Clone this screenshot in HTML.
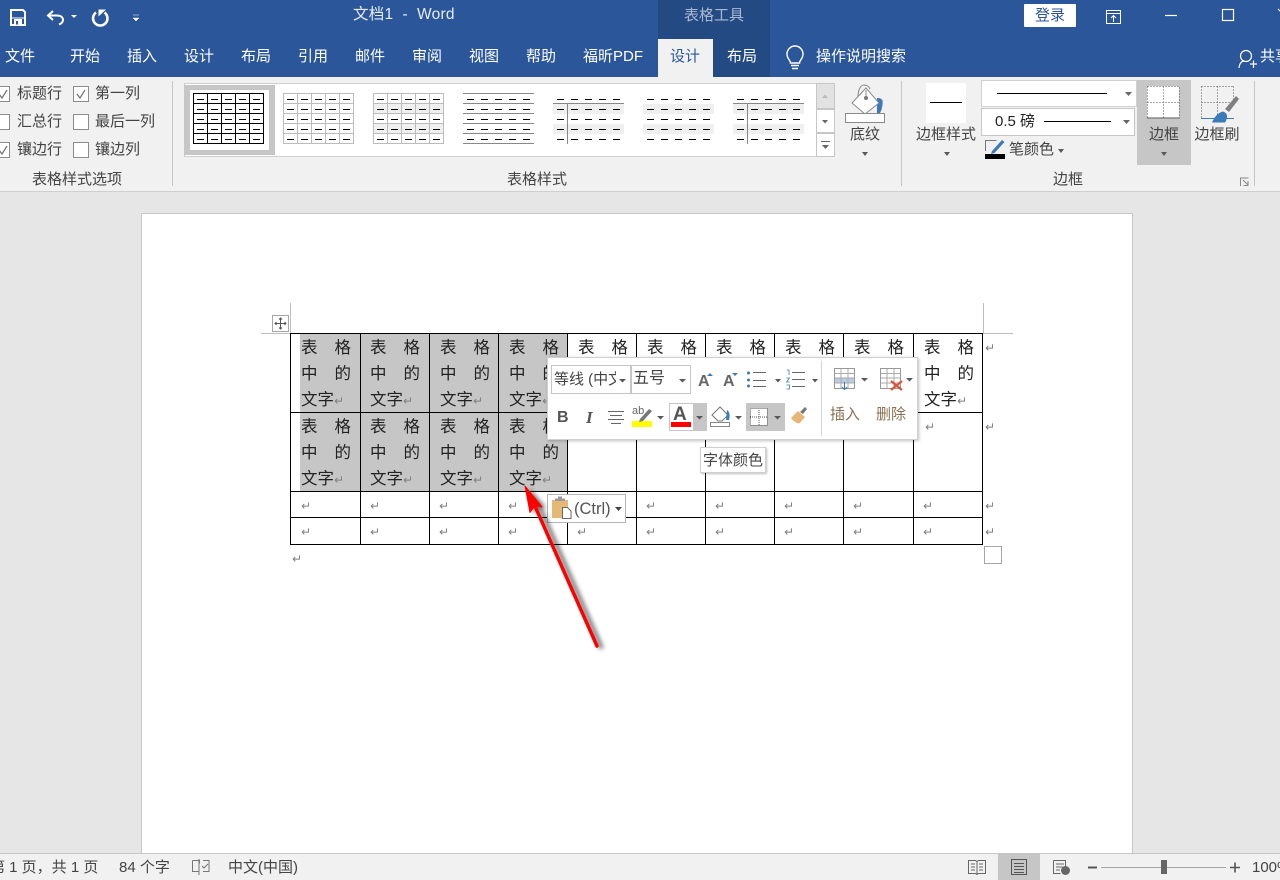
<!DOCTYPE html>
<html lang="zh"><head><meta charset="utf-8"><title>文档1 - Word</title>
<style>
html,body{margin:0;padding:0}
body{width:1280px;height:880px;overflow:hidden;position:relative;background:#e6e6e6;font-family:"Liberation Sans","Noto Sans CJK SC",sans-serif;color:#444}
.a,.t,.w,.c,.r{position:absolute}
.t{white-space:nowrap;font-size:15px;line-height:20px;color:#444}
.w{white-space:nowrap;font-size:15px;line-height:20px;color:#fff}
.m{transform:translateX(-50%)}
.c{width:50px;font-size:16.5px;line-height:26px;color:#222;white-space:nowrap}
.c div{display:flex;justify-content:space-between;height:26px}
.c i,.r{font-style:normal;font-family:"DejaVu Sans",sans-serif;font-size:12px;color:#808080}
.r{line-height:12px}
svg{position:absolute;left:0;top:0;overflow:visible}
</style></head><body>

<div class="a" style="left:0;top:0;width:1280px;height:77px;background:#2b579a"></div>
<div class="a" style="left:658px;top:0;width:112px;height:77px;background:#234a82"></div>
<div class="a" style="left:658px;top:39px;width:55px;height:38px;background:#f1f1f1"></div>
<div class="a" style="left:0;top:77px;width:1280px;height:114px;background:#f1f1f1;border-bottom:1px solid #cfcfcf"></div>
<div class="a" style="left:141px;top:213px;width:990px;height:640px;background:#fff;border:1px solid #c6c6c6;border-bottom:0"></div>
<div class="a" style="left:0;top:853px;width:1280px;height:27px;background:#f1f1f1;border-top:1px solid #c6c6c6;box-sizing:border-box"></div>

<div class="w" style="left:353px;top:5px;font-size:15.5px;color:#e6ebf3;letter-spacing:.25px">文档1&nbsp; -&nbsp; Word</div>
<div class="w m" style="left:714px;top:6px;color:#a9b9d1">表格工具</div>
<div class="a" style="left:1024px;top:4px;width:52px;height:23px;background:#fff;border-radius:1px"></div>
<div class="w m" style="left:1050px;top:6px;color:#2b579a">登录</div>

<div class="w" style="left:5px;top:47px">文件</div>
<div class="w" style="left:70px;top:47px">开始</div>
<div class="w" style="left:127px;top:47px">插入</div>
<div class="w" style="left:184px;top:47px">设计</div>
<div class="w" style="left:241px;top:47px">布局</div>
<div class="w" style="left:298px;top:47px">引用</div>
<div class="w" style="left:355px;top:47px">邮件</div>
<div class="w" style="left:412px;top:47px">审阅</div>
<div class="w" style="left:469px;top:47px">视图</div>
<div class="w" style="left:526px;top:47px">帮助</div>
<div class="w" style="left:583px;top:47px">福昕PDF</div>
<div class="w" style="left:670px;top:47px;color:#2b579a">设计</div>
<div class="w" style="left:727px;top:47px">布局</div>
<div class="w" style="left:816px;top:47px">操作说明搜索</div>
<div class="w" style="left:1260px;top:47px">共享</div>

<svg width="1280" height="880" viewBox="0 0 1280 880">
<defs>
<g id="d" stroke="#000" stroke-width="1">
<path d="M197 99.500h7M211 99.500h7M225 99.500h7M239 99.500h7M253 99.500h7M197 109.500h7M211 109.500h7M225 109.500h7M239 109.500h7M253 109.500h7M197 119.500h7M211 119.500h7M225 119.500h7M239 119.500h7M253 119.500h7M197 129.500h7M211 129.500h7M225 129.500h7M239 129.500h7M253 129.500h7M197 139.500h7M211 139.500h7M225 139.500h7M239 139.500h7M253 139.500h7"/>
</g>
<g id="grid" fill="none"><path d="M193.500 93.500h70v50h-70zM207.500 93.500v50M221.500 93.500v50M235.500 93.500v50M249.500 93.500v50M193.500 103.500h70M193.500 113.500h70M193.500 123.500h70M193.500 133.500h70"/></g>
<g id="band" fill="#f0f0f0"><rect x="193" y="104" width="71" height="10"/><rect x="193" y="124" width="71" height="10"/></g>
<g id="hl"><path d="M193 103.500h71" stroke="#888"/><path d="M207.500 104v40" stroke="#888"/></g>
</defs>

<!-- title bar icons -->
<path d="M11 10h12l2 2v13H11z" fill="none" stroke="#fff" stroke-width="2"/>
<path d="M14 19h8v6h-8z" fill="#fff"/><rect x="16" y="21" width="2" height="3.500" fill="#2b579a"/>
<path d="M11 18h14" stroke="#fff" stroke-width="1"/>
<path d="M53 11l-5 4.500 5 4.500" fill="none" stroke="#fff" stroke-width="2"/>
<path d="M48 15.500h9c4 0 6 2 6 4.500 0 2-1.500 3.500-4 4.500" fill="none" stroke="#fff" stroke-width="2"/>
<path d="M71 15h6l-3 3z" fill="#fff"/>
<path d="M96 12.500a7.200 7.200 0 1 0 8.500 0" fill="none" stroke="#fff" stroke-width="2.600"/>
<path d="M106 9.500h-7.500v7z" fill="#fff"/>
<path d="M133 15h6M133 18h6l-3 3z" fill="#fff" stroke="#fff" stroke-width=".5"/>
<path d="M1106.500 10.500h14v13h-14zM1106.500 13.500h14M1113.500 22v-6M1111 18l2.500-2.500 2.500 2.500" fill="none" stroke="#fff"/>
<path d="M1165 15.500h12" stroke="#fff" stroke-width="1.200"/>
<rect x="1222.500" y="9.500" width="11" height="11" fill="none" stroke="#fff" stroke-width="1.200"/>
<path d="M1278 9l3 3" stroke="#fff"/>
<!-- bulb, share -->
<path d="M790.500 63c0-3-3.500-4-3.500-9a8 8 0 0 1 16 0c0 5-3.500 6-3.500 9z" fill="none" stroke="#fff" stroke-width="1.400"/><path d="M791 65.500h8M792 68.500h6" stroke="#fff" stroke-width="1.400"/>
<circle cx="1246" cy="56" r="5.500" fill="none" stroke="#fff" stroke-width="1.200"/><path d="M1239 68c.5-5 3-7 5-7M1250 64h7M1253.500 60.500v7.500" fill="none" stroke="#fff" stroke-width="1.200"/>

<!-- checkboxes -->
<g fill="#fff" stroke="#8c8c8c">
<rect x="-5.500" y="86.500" width="15" height="15"/><rect x="-5.500" y="114.500" width="15" height="15"/><rect x="-5.500" y="142.500" width="15" height="15"/>
<rect x="73.500" y="86.500" width="15" height="15"/><rect x="73.500" y="114.500" width="15" height="15"/><rect x="73.500" y="142.500" width="15" height="15"/>
</g>
<path d="M-1 94l3 4 5-8M-1 150l3 4 5-8M77 94l3 4 5-8" fill="none" stroke="#777" stroke-width="1.300"/>

<!-- separators -->
<path d="M172.500 81v105M901.500 81v105M1254.500 81v105" stroke="#c6c6c6"/>

<!-- gallery -->
<rect x="184.500" y="83.500" width="650" height="73" fill="#fff" stroke="#d0d0d0"/>
<rect x="184" y="85" width="91" height="70" fill="#c6c6c6"/><rect x="190" y="90" width="79" height="60" fill="#fff"/>
<use href="#grid" stroke="#000" stroke-width="1"/><use href="#d"/>
<g transform="translate(90 0)"><use href="#grid" stroke="#bcbcbc"/><use href="#d"/></g>
<g transform="translate(180 0)"><use href="#band"/><use href="#grid" stroke="#bcbcbc"/><use href="#d"/></g>
<g transform="translate(270 0)"><path d="M193 93.500h71M193 103.500h71M193 113.500h71M193 123.500h71M193 133.500h71M193 143.500h71" stroke="#888"/><use href="#d"/></g>
<g transform="translate(360 0)"><use href="#band"/><use href="#hl"/><use href="#d"/></g>
<g transform="translate(450 0)"><use href="#band"/><use href="#d"/></g>
<g transform="translate(540 0)"><use href="#band"/><use href="#hl"/><use href="#d"/></g>
<!-- gallery scroll -->
<rect x="816.500" y="83.500" width="18" height="25" fill="#e2e2e2" stroke="#c6c6c6"/>
<rect x="816.500" y="109.500" width="18" height="23" fill="#fff" stroke="#c6c6c6"/>
<rect x="816.500" y="133.500" width="18" height="23" fill="#fff" stroke="#c6c6c6"/>
<path d="M822 98h6l-3-3.500z" fill="#bbb"/><path d="M822 120h6l-3 3.500z" fill="#666"/>
<path d="M821 141.500h9" stroke="#666"/><path d="M822 145h7l-3.500 4z" fill="#666"/>

<!-- shading -->
<path d="M877 98c3 0 5 1 5.500 2.500.5 4-.5 9-2.500 12.500h-3z" fill="#3d7ab8"/>
<path d="M852 103l14-15 13 15-14 11z" fill="#fff" stroke="#8a8a8a"/>
<path d="M858 97c0-8 3-12 6-12 3 0 5 1.500 6 4" fill="none" stroke="#8a8a8a"/><path d="M866 90v8" stroke="#8a8a8a"/><circle cx="866" cy="98" r="2" fill="#777"/>
<rect x="845.500" y="113.500" width="39" height="9" fill="#fff" stroke="#8a8a8a"/>
<g fill="#595959"><path d="M862 152h6l-3 4zM944 152h6l-3 4zM1058 149h6l-3 4z"/></g>

<!-- border styles -->
<rect x="926" y="83" width="40" height="40" fill="#fff"/><path d="M930 102.500h32" stroke="#000"/>
<rect x="981.500" y="80.500" width="155" height="26" fill="#fff" stroke="#d0d0d0"/>
<path d="M997 93.500h110" stroke="#000"/><path d="M1125 92h7l-3.500 4z" fill="#666"/>
<rect x="981.500" y="108.500" width="153" height="27" fill="#fff" stroke="#c6c6c6"/>
<path d="M1044 121.500h67" stroke="#000"/><path d="M1123 120h7l-3.500 4z" fill="#666"/>
<rect x="1137" y="80" width="54" height="85" fill="#c6c6c6"/>
<path d="M1161 152h6l-3 4z" fill="#595959"/>
<rect x="1147" y="86" width="32" height="32" fill="#fff"/>
<path d="M1147.500 86.500h32v31M1147.500 86.500v31M1163.500 86.500v31M1147.500 102.500h32" fill="none" stroke="#555" stroke-dasharray="1 2"/><path d="M1147 118h33" stroke="#777" stroke-width="1.200"/>
<path d="M1201.500 86.500h32M1201.500 86.500v31M1217.500 86.500v31M1201.500 102.500h32M1233.500 86.500v14" fill="none" stroke="#555" stroke-dasharray="1 2"/><path d="M1201 118.500h33" stroke="#3d7ab8"/>
<path d="M1225 109l11-13 3 3-10 13z" fill="#808080"/><path d="M1212 122.500c2-5 6-10 11-11 3 1 4.500 3.500 4 6-.5 2-1 4-2 5z" fill="#3d7ab8"/>
<!-- pen colour -->
<path d="M985.500 151v-10.500h11" fill="none" stroke="#777"/><rect x="985" y="154" width="20" height="5" fill="#000"/>
<path d="M992 151l10-11 2.500 2-10 11-3.500 1z" fill="#3d7ab8"/>
<!-- dialog launcher -->
<path d="M1240.500 186v-8h8M1243 180l5 5M1248 181v4.500h-4.500" fill="none" stroke="#888"/>

<!-- table crop marks -->
<path d="M290.500 303v30M261 333.500h30M983.500 303v30M983 333.500h30" stroke="#bdbdbd"/>
<rect x="272.500" y="315.500" width="16" height="16" fill="#fff" stroke="#a6a6a6"/>
<path d="M280.500 318v11M275 323.500h11M279 319.500l1.500-1.500 1.500 1.500M279 327.500l1.500 1.500 1.500-1.500M276.500 322l-1.500 1.500 1.500 1.500M284.500 322l1.500 1.500-1.500 1.500" fill="none" stroke="#555"/>
<rect x="984.500" y="546.500" width="17" height="17" fill="#fff" stroke="#a6a6a6"/>

<!-- table -->
<rect x="300" y="334" width="267" height="157" fill="#c6c6c6"/>
<path d="M290 333.500h693M290 412.500h693M290 491.500h693M290 517.500h693M290 544.500h693M290.500 333v212M360.500 333v212M429.500 333v212M498.500 333v212M567.500 333v212M636.500 333v212M705.500 333v212M774.500 333v212M843.500 333v212M913.500 333v212M982.500 333v212" stroke="#000" fill="none"/>
</svg>

<div class="c" style="left:301px;top:335px"><div><span>表</span><span>格</span></div><div><span>中</span><span>的</span></div><div><span>文字<i>↵</i></span></div></div>
<div class="c" style="left:370px;top:335px"><div><span>表</span><span>格</span></div><div><span>中</span><span>的</span></div><div><span>文字<i>↵</i></span></div></div>
<div class="c" style="left:440px;top:335px"><div><span>表</span><span>格</span></div><div><span>中</span><span>的</span></div><div><span>文字<i>↵</i></span></div></div>
<div class="c" style="left:509px;top:335px"><div><span>表</span><span>格</span></div><div><span>中</span><span>的</span></div><div><span>文字<i>↵</i></span></div></div>
<div class="c" style="left:578px;top:335px"><div><span>表</span><span>格</span></div><div><span>中</span><span>的</span></div><div><span>文字<i>↵</i></span></div></div>
<div class="c" style="left:647px;top:335px"><div><span>表</span><span>格</span></div><div><span>中</span><span>的</span></div><div><span>文字<i>↵</i></span></div></div>
<div class="c" style="left:716px;top:335px"><div><span>表</span><span>格</span></div><div><span>中</span><span>的</span></div><div><span>文字<i>↵</i></span></div></div>
<div class="c" style="left:785px;top:335px"><div><span>表</span><span>格</span></div><div><span>中</span><span>的</span></div><div><span>文字<i>↵</i></span></div></div>
<div class="c" style="left:854px;top:335px"><div><span>表</span><span>格</span></div><div><span>中</span><span>的</span></div><div><span>文字<i>↵</i></span></div></div>
<div class="c" style="left:924px;top:335px"><div><span>表</span><span>格</span></div><div><span>中</span><span>的</span></div><div><span>文字<i>↵</i></span></div></div>
<div class="c" style="left:301px;top:414px"><div><span>表</span><span>格</span></div><div><span>中</span><span>的</span></div><div><span>文字<i>↵</i></span></div></div>
<div class="c" style="left:370px;top:414px"><div><span>表</span><span>格</span></div><div><span>中</span><span>的</span></div><div><span>文字<i>↵</i></span></div></div>
<div class="c" style="left:440px;top:414px"><div><span>表</span><span>格</span></div><div><span>中</span><span>的</span></div><div><span>文字<i>↵</i></span></div></div>
<div class="c" style="left:509px;top:414px"><div><span>表</span><span>格</span></div><div><span>中</span><span>的</span></div><div><span>文字<i>↵</i></span></div></div>

<div class="r" style="left:985px;top:342px">↵</div><div class="r" style="left:985px;top:421px">↵</div><div class="r" style="left:925px;top:421px">↵</div>
<div class="r" style="left:985px;top:500px">↵</div><div class="r" style="left:985px;top:526px">↵</div>
<div class="r" style="left:301px;top:500px">↵</div><div class="r" style="left:370px;top:500px">↵</div><div class="r" style="left:439px;top:500px">↵</div><div class="r" style="left:508px;top:500px">↵</div>
<div class="r" style="left:646px;top:500px">↵</div><div class="r" style="left:715px;top:500px">↵</div><div class="r" style="left:784px;top:500px">↵</div><div class="r" style="left:853px;top:500px">↵</div><div class="r" style="left:923px;top:500px">↵</div>
<div class="r" style="left:301px;top:526px">↵</div><div class="r" style="left:370px;top:526px">↵</div><div class="r" style="left:439px;top:526px">↵</div><div class="r" style="left:508px;top:526px">↵</div><div class="r" style="left:577px;top:526px">↵</div>
<div class="r" style="left:646px;top:526px">↵</div><div class="r" style="left:715px;top:526px">↵</div><div class="r" style="left:784px;top:526px">↵</div><div class="r" style="left:853px;top:526px">↵</div><div class="r" style="left:923px;top:526px">↵</div>
<div class="r" style="left:292px;top:553px">↵</div>

<!-- ribbon text -->
<div class="t" style="left:17px;top:84px">标题行</div><div class="t" style="left:95px;top:84px">第一列</div>
<div class="t" style="left:17px;top:112px">汇总行</div><div class="t" style="left:95px;top:112px">最后一列</div>
<div class="t" style="left:17px;top:140px">镶边行</div><div class="t" style="left:95px;top:140px">镶边列</div>
<div class="t m" style="left:77px;top:170px">表格样式选项</div>
<div class="t m" style="left:537px;top:170px">表格样式</div>
<div class="t m" style="left:865px;top:125px">底纹</div>
<div class="t m" style="left:946px;top:125px">边框样式</div>
<div class="t m" style="left:1164px;top:125px">边框</div>
<div class="t m" style="left:1217px;top:125px">边框刷</div>
<div class="t" style="left:1009px;top:140px">笔颜色</div>
<div class="t" style="left:995px;top:112px;color:#222">0.5 磅</div>
<div class="t m" style="left:1068px;top:170px">边框</div>

<!-- status bar -->
<div class="t" style="left:-10px;top:858px">第 1 页，共 1 页</div>
<div class="t" style="left:119px;top:858px">84 个字</div>
<div class="t" style="left:228px;top:858px">中文(中国)</div>
<div class="t" style="left:1252px;top:858px">100%</div>
<svg width="1280" height="880" viewBox="0 0 1280 880">
<path d="M192.500 860.500h7v3M199.500 871.500h-7v-11M199 859v16M203 860.500h6v11h-6" fill="none" stroke="#777"/><path d="M202 866l2 2 4-4" fill="none" stroke="#777"/>
<rect x="998" y="854" width="42" height="26" fill="#c6c6c6"/>
<path d="M968.500 860.500h7l1.500 1 1.500-1h7v13h-7l-1.500 1-1.500-1h-7zM977 861v13M971 864h4M971 867h4M971 870h4M979 864h4M979 867h4M979 870h4" fill="none" stroke="#666"/>
<path d="M1011.500 859.500h15v15h-15zM1014 863.500h10M1014 866.500h10M1014 869.500h10M1014 872.500h10" fill="none" stroke="#555"/>
<path d="M1053.500 860.500h12v8M1053.500 860.500v13h7M1056 864h8M1056 867h7M1056 870h4" fill="none" stroke="#666"/><circle cx="1065.500" cy="870.500" r="4.500" fill="#666"/>
<path d="M1088 867.500h9" stroke="#555" stroke-width="2"/>
<path d="M1101 867.500h125" stroke="#a6a6a6"/><rect x="1161" y="860" width="6" height="14" fill="#666"/>
<path d="M1230 867.500h10M1235 862.500v10" stroke="#555" stroke-width="1.600"/>
</svg>

<!-- mini toolbar -->
<div class="a" style="left:547px;top:357px;width:371px;height:83px;background:#fff;box-sizing:border-box;border:1px solid #d0d0d0;box-shadow:1px 1px 3px rgba(0,0,0,.25)"></div>
<div class="a" style="left:551px;top:365px;width:80px;height:29px;box-sizing:border-box;border:1px solid #c6c6c6"></div>
<div class="a" style="left:631px;top:365px;width:60px;height:29px;box-sizing:border-box;border:1px solid #c6c6c6"></div>
<div class="t" style="left:554px;top:370px;width:62px;overflow:hidden">等线 (中文</div>
<div class="t" style="left:633px;top:369px;font-size:16px">五号</div>
<div class="t" style="left:830px;top:405px;color:#8b6f4e">插入</div>
<div class="t" style="left:876px;top:405px;color:#8b6f4e">删除</div>
<div class="t" style="left:557px;top:408px;font-weight:bold;font-size:16px;color:#555">B</div>
<div class="t" style="left:586px;top:408px;font-weight:bold;font-style:italic;font-family:'Liberation Serif',serif;font-size:17px;color:#555">I</div>
<div class="t" style="left:698px;top:372px;font-size:16px;font-weight:bold;color:#666">A</div>
<div class="t" style="left:723px;top:372px;font-size:16px;font-weight:bold;color:#666">A</div>
<div class="a" style="left:669px;top:403px;width:25px;height:28px;box-sizing:border-box;border:1px solid #c6c6c6"></div>
<div class="a" style="left:694px;top:403px;width:13px;height:28px;background:#c6c6c6"></div>
<div class="a" style="left:746px;top:403px;width:39px;height:28px;background:#c6c6c6"></div>
<div class="t" style="left:673px;top:405px;font-size:19px;font-weight:bold;color:#555">A</div>
<div class="t" style="left:632px;top:401px;font-size:11px;color:#666">ab</div>
<svg width="1280" height="880" viewBox="0 0 1280 880">
<g fill="#595959"><path d="M619 379h7l-3.500 3.500zM679 379h7l-3.500 3.500zM812 379h6l-3 3.500zM775 379h6l-3 3.500zM861 378h7l-3.500 3.500zM906 378h7l-3.500 3.500zM657 416h7l-3.500 3.500zM696 416h7l-3.500 3.500zM735 416h7l-3.500 3.500zM774 416h7l-3.500 3.500z"/></g>
<path d="M707 376l3-3 3 3zM732 373l3 3 3-3z" fill="#3d7ab8"/>
<g fill="#3d7ab8"><circle cx="748.500" cy="373" r="1.500"/><circle cx="748.500" cy="380" r="1.500"/><circle cx="748.500" cy="386" r="1.500"/></g>
<path d="M753 372.500h13M753 380.500h13M753 386.500h13M792 372.500h13M792 379.500h13M792 386.500h13" stroke="#666"/>
<path d="M787 370h2v5M786.500 378h3l-3 4h3M786.500 385h3v4h-3" fill="none" stroke="#3d7ab8" stroke-width=".8"/>
<path d="M608 411.500h16M610 415.500h12M608 419.500h16M611 423.500h10" stroke="#666"/>
<rect x="632" y="421" width="20" height="6" fill="#ff0"/>
<path d="M640 419l9-10 3 2-9 10-4 1z" fill="#777"/>
<rect x="671" y="422" width="20" height="5" fill="#f00"/>
<rect x="710.500" y="422.500" width="19" height="4" fill="#fff" stroke="#888"/>
<path d="M712 415l8-8 8 8-6 6h-4z" fill="#fff" stroke="#777"/><path d="M727 410c3 2 3 6 2 10h-3z" fill="#3d7ab8"/>
<rect x="750" y="408" width="17" height="17" fill="#fff"/><path d="M750.500 408.500h17v17h-17zM759 408v17M750 417h18" fill="none" stroke="#555" stroke-dasharray="1 1"/>
<path d="M791 418l7-7 7 6-5 6c-3 1-7-2-9-5z" fill="#e5b878"/><path d="M800 412l5-5 2 2-4 5z" fill="#777"/>
<path d="M821.500 361v75" stroke="#d5d5d5"/>
<rect x="834.500" y="368.500" width="20" height="20" fill="#fff" stroke="#999"/><rect x="835" y="378" width="19" height="5" fill="#b8cde4"/><path d="M841 369v19M848 369v19M835 373.500h19M835 378h19M835 383h19" stroke="#aaa" fill="none"/><path d="M844.500 382v7M842 387l2.500 2.500 2.500-2.500" stroke="#3d7ab8" fill="none"/>
<rect x="880.500" y="368.500" width="20" height="20" fill="#fff" stroke="#999"/><path d="M887 369v19M894 369v19M881 373.500h19M881 378h19M881 383h19" stroke="#aaa" fill="none"/><path d="M891 381l11 9M902 381l-11 9" stroke="#d9553a" stroke-width="2.200"/>
</svg>

<!-- tooltip -->
<div class="a" style="left:700px;top:447px;width:66px;height:26px;background:#fff;box-sizing:border-box;border:1px solid #d0d0d0;box-shadow:1px 1px 2px rgba(0,0,0,.25)"></div>
<div class="t" style="left:703px;top:451px">字体颜色</div>

<!-- paste tag -->
<div class="a" style="left:547px;top:494px;width:79px;height:29px;background:#fff;box-sizing:border-box;border:1px solid #b4b4b4"></div>
<div class="t" style="left:574px;top:499px;font-size:16.5px;color:#555">(Ctrl)</div>
<svg width="1280" height="880" viewBox="0 0 1280 880">
<path d="M552 500h16v18h-16z" fill="#e5b878"/><path d="M555 501h10v-2.500h-3v-2h-4v2h-3z" fill="#999"/><path d="M562.500 507.500h5l3.500 3.500v7.500h-8.500z" fill="#fff" stroke="#666"/>
<path d="M615 507h7l-3.500 4z" fill="#444"/>
</svg>

<!-- red arrow -->
<svg width="1280" height="880" viewBox="0 0 1280 880">
<defs><filter id="s" filterUnits="userSpaceOnUse" x="500" y="470" width="130" height="200"><feGaussianBlur stdDeviation="2.500"/></filter></defs>
<g filter="url(#s)" opacity=".6"><path d="M601 647L539 506" stroke="#000" stroke-width="4" stroke-linecap="round"/><path d="M529 488l17 20-7-1-5 7z" fill="#000"/></g>
<path d="M597 646L534 504" stroke="#f00" stroke-width="3.500" stroke-linecap="round"/><path d="M525 486l17 21-7-1.500-5 7z" fill="#f00" stroke="#f00" stroke-linejoin="round"/>
</svg>
</body></html>
